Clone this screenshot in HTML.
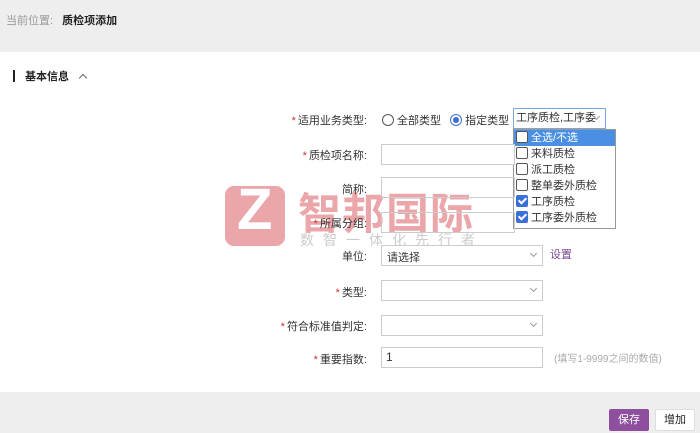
<!DOCTYPE html><html><head><meta charset="utf-8"><style>
body{margin:0;width:700px;height:433px;overflow:hidden;background:#fff;font-family:"Liberation Sans","Noto Sans CJK SC",sans-serif;font-size:11px;color:#333;position:relative}
.a{position:absolute}
.lbl{position:absolute;right:333px;text-align:right;white-space:nowrap;font-size:11px}
.lbl i{color:#c33;font-style:normal;margin-right:2px}
.inp{position:absolute;left:381px;width:160px;height:19px;border:1px solid #ccc;background:#fff}
.sel:after{content:"";position:absolute;right:6px;top:5px;width:4px;height:4px;border-right:1px solid #999;border-bottom:1px solid #999;transform:rotate(45deg)}
.cb{display:inline-block;width:10px;height:10px;border:1px solid #555;border-radius:2px;vertical-align:-2px;margin:0 3px 0 2px;background:#fff}
.ck{background:#3b6fd8;border-color:#3b6fd8;position:relative}
.ck:after{content:"";position:absolute;left:3px;top:0;width:3px;height:6px;border-right:2px solid #fff;border-bottom:2px solid #fff;transform:rotate(45deg)}
.it{height:16px;line-height:16px}
</style></head><body>
<div class="a" style="left:0;top:0;width:700px;height:52px;background:#eee"></div>
<div class="a" style="left:6px;top:12px;font-size:11px;color:#999">当前位置: <b style="color:#222;margin-left:6px">质检项添加</b></div>
<div class="a" style="left:13px;top:70px;width:2px;height:12px;background:#222"></div>
<div class="a" style="left:25px;top:68px;font-weight:bold;color:#222">基本信息</div>
<div class="a" style="left:80px;top:75px;width:5px;height:5px;border-left:1px solid #666;border-top:1px solid #666;transform:rotate(45deg)"></div>

<div class="a" style="left:225px;top:186px;width:60px;height:60px;border-radius:9px;background:#eba6aa"></div>
<div class="a" style="left:237px;top:176px;font:bold 58px 'Liberation Sans',sans-serif;color:#fff">Z</div>
<div class="a" style="left:298px;top:180px;font-size:43px;font-weight:bold;color:#eba6aa;letter-spacing:1px">智邦国际</div>
<div class="a" style="left:300px;top:230px;font-size:14px;color:#ccc;letter-spacing:9px">数智一体化先行者</div>

<div class="lbl" style="top:112px"><i>*</i>适用业务类型:</div>
<div class="a" style="left:382px;top:112px"><span style="display:inline-block;width:10px;height:10px;border:1px solid #555;border-radius:50%;vertical-align:-2px"></span> 全部类型 <span style="display:inline-block;width:10px;height:10px;border:1px solid #3b6fd8;border-radius:50%;vertical-align:-2px;margin-left:6px;position:relative"><span style="position:absolute;left:2px;top:2px;width:6px;height:6px;border-radius:50%;background:#3b6fd8"></span></span> 指定类型</div>
<div class="inp sel" style="left:513px;top:108px;width:91px;height:19px;border-color:#7aa7d8;overflow:hidden;line-height:19px;white-space:nowrap"><span style="margin-left:2px">工序质检,工序委</span></div>
<div class="a" style="left:513px;top:129px;width:101px;height:98px;border:1px solid #999;background:#fff">
<div class="it" style="background:#4a8fe2;color:#fff"><span class="cb"></span>全选/不选</div>
<div class="it"><span class="cb"></span>来料质检</div>
<div class="it"><span class="cb"></span>派工质检</div>
<div class="it"><span class="cb"></span>整单委外质检</div>
<div class="it"><span class="cb ck"></span>工序质检</div>
<div class="it"><span class="cb ck"></span>工序委外质检</div>
</div>

<div class="lbl" style="top:147px"><i>*</i>质检项名称:</div>
<div class="inp" style="top:144px;width:132px"></div>
<div class="lbl" style="top:181px">简称:</div>
<div class="inp" style="top:177px;width:132px;background:transparent"></div>
<div class="lbl" style="top:215px"><i>*</i>所属分组:</div>
<div class="inp" style="top:212px;width:132px;background:transparent"></div>
<div class="lbl" style="top:248px">单位:</div>
<div class="inp sel" style="top:245px"><span style="position:absolute;left:5px;top:3px">请选择</span></div>
<div class="a" style="left:550px;top:246px;color:#7b4a8e">设置</div>
<div class="lbl" style="top:284px"><i>*</i>类型:</div>
<div class="inp sel" style="top:280px"></div>
<div class="lbl" style="top:318px"><i>*</i>符合标准值判定:</div>
<div class="inp sel" style="top:315px"></div>
<div class="lbl" style="top:351px"><i>*</i>重要指数:</div>
<div class="inp" style="top:347px"><span style="position:absolute;left:4px;top:2px;font-size:12px">1</span></div>
<div class="a" style="left:554px;top:350px;color:#aaa;font-size:10px">(填写1-9999之间的数值)</div>

<div class="a" style="left:0;top:392px;width:700px;height:41px;background:#eee"></div>
<div class="a" style="left:609px;top:409px;width:40px;height:22px;background:#8e4f9e;color:#fff;text-align:center;line-height:22px;border-radius:2px">保存</div>
<div class="a" style="left:655px;top:409px;width:40px;height:22px;background:#fff;border:1px solid #ddd;box-sizing:border-box;text-align:center;line-height:20px;color:#222;border-radius:2px">增加</div>
</body></html>
